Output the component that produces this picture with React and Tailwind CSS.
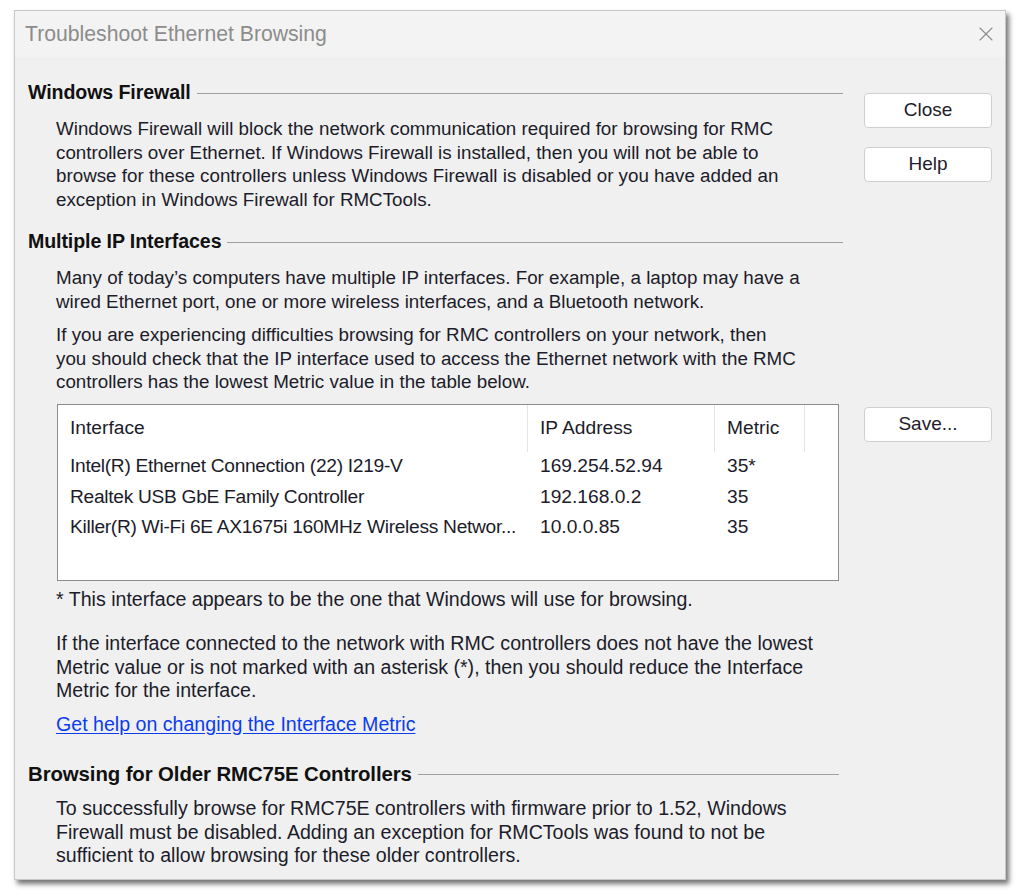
import { X } from "lucide-react";

const sans = "font-['Liberation_Sans',Arial,sans-serif]";

function SectionHeading({ children, size = "text-[19.6px]" }) {
  return (
    <div className="flex items-center h-6">
      <span className={`font-bold ${size} text-[#111] whitespace-nowrap tracking-[-0.1px]`}>{children}</span>
      <div className="flex-1 ml-1.5 border-t border-[#a0a0a0]" />
    </div>
  );
}

function Lines({ lines, className = "" }) {
  return (
    <div className={`pl-7 text-[#1c1c2a] leading-[23.5px] whitespace-nowrap ${className}`}>
      {lines.map((l, i) => (
        <div key={i}>{l}</div>
      ))}
    </div>
  );
}

function DialogButton({ children, className = "" }) {
  return (
    <button
      type="button"
      className={`w-[128px] h-[35px] bg-white border border-[#cfcfcf] rounded-[4px] text-[19px] text-[#1c1c2a] ${className}`}
    >
      {children}
    </button>
  );
}

const rows = [
  { name: "Intel(R) Ethernet Connection (22) I219-V", ip: "169.254.52.94", metric: "35*" },
  { name: "Realtek USB GbE Family Controller", ip: "192.168.0.2", metric: "35" },
  { name: "Killer(R) Wi-Fi 6E AX1675i 160MHz Wireless Networ...", ip: "10.0.0.85", metric: "35" },
];

export default function App() {
  return (
    <div className={`w-[1024px] h-[896px] bg-white pt-[10px] pl-[14px] ${sans}`}>
      <div className="w-[992px] h-[870px] flex flex-col bg-[#f0f0f0] border border-[#c8c8c8] shadow-[3px_4px_5px_rgba(0,0,0,0.55)]">
        {/* title bar */}
        <div className="h-[46px] flex items-center justify-between pl-[10px] pr-[7px] bg-[#f3f3f3]">
          <span className="text-[21.2px] text-[#8c8c8c]">Troubleshoot Ethernet Browsing</span>
          <X className="size-6 text-[#8c8c8c]" strokeWidth={1.1} />
        </div>

        <div className="flex flex-1 pl-[13px] pr-[13px] pt-[24px]">
          {/* left column */}
          <div className="w-[815px] text-[18.8px]">
            <SectionHeading>Windows Firewall</SectionHeading>
            <Lines
              className="mt-[12px]"
              lines={[
                "Windows Firewall will block the network communication required for browsing for RMC",
                "controllers over Ethernet. If Windows Firewall is installed, then you will not be able to",
                "browse for these controllers unless Windows Firewall is disabled or you have added an",
                "exception in Windows Firewall for RMCTools.",
              ]}
            />

            <div className="mt-[19px]">
              <SectionHeading>Multiple IP Interfaces</SectionHeading>
            </div>
            <Lines
              className="mt-[12px]"
              lines={[
                "Many of today\u2019s computers have multiple IP interfaces. For example, a laptop may have a",
                "wired Ethernet port, one or more wireless interfaces, and a Bluetooth network.",
              ]}
            />
            <Lines
              className="mt-[10px]"
              lines={[
                "If you are experiencing difficulties browsing for RMC controllers on your network, then",
                "you should check that the IP interface used to access the Ethernet network with the RMC",
                "controllers has the lowest Metric value in the table below.",
              ]}
            />

            {/* interface table */}
            <div className="ml-[29px] mr-[4px] mt-[10px] h-[177px] bg-white border border-[#8c8c8c] text-[19.2px] text-[#1c1c2a]">
              <div className="flex h-[47px]">
                <div className="w-[470px] pl-3 flex items-center border-r border-[#e5e5e5]">Interface</div>
                <div className="w-[187px] pl-3 flex items-center border-r border-[#e5e5e5]">IP Address</div>
                <div className="w-[90px] pl-3 flex items-center border-r border-[#e5e5e5]">Metric</div>
              </div>
              {rows.map((r) => (
                <div key={r.ip} className="flex h-[30.5px] items-center whitespace-nowrap">
                  <div className="w-[470px] shrink-0 pl-3 tracking-[-0.3px]">{r.name}</div>
                  <div className="w-[187px] shrink-0 pl-3">{r.ip}</div>
                  <div className="w-[90px] shrink-0 pl-3">{r.metric}</div>
                </div>
              ))}
            </div>

            <div className="text-[19.6px]">
              <Lines className="mt-[7px]" lines={["* This interface appears to be the one that Windows will use for browsing."]} />
              <Lines
                className="mt-[21px]"
                lines={[
                  "If the interface connected to the network with RMC controllers does not have the lowest",
                  "Metric value or is not marked with an asterisk (*), then you should reduce the Interface",
                  "Metric for the interface.",
                ]}
              />
              <div className="pl-7 mt-[10px] leading-[23.5px]">
                <a href="#" className="text-[#0a3cf0] underline underline-offset-2">
                  Get help on changing the Interface Metric
                </a>
              </div>

              <div className="mt-[26px] mr-[4px]">
                <SectionHeading size="text-[20.4px]">Browsing for Older RMC75E Controllers</SectionHeading>
              </div>
              <Lines
                className="mt-[11px]"
                lines={[
                  "To successfully browse for RMC75E controllers with firmware prior to 1.52, Windows",
                  "Firewall must be disabled. Adding an exception for RMCTools was found to not be",
                  "sufficient to allow browsing for these older controllers.",
                ]}
              />
            </div>
          </div>

          {/* right button column */}
          <div className="ml-auto flex flex-col">
            <DialogButton className="mt-[12px]">Close</DialogButton>
            <DialogButton className="mt-[19px]">Help</DialogButton>
            <DialogButton className="mt-[225px]">Save...</DialogButton>
          </div>
        </div>
      </div>
    </div>
  );
}
